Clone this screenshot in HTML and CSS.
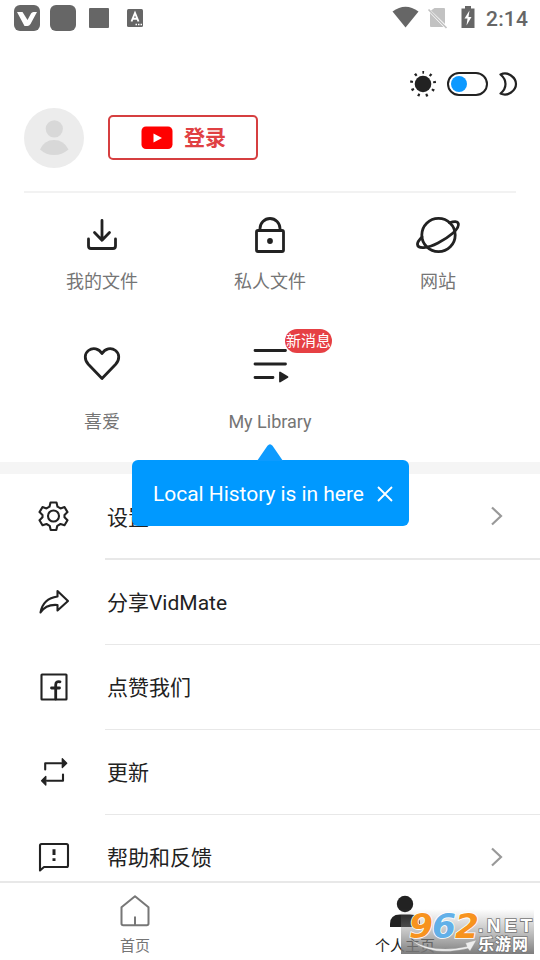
FILE: index.html
```html
<!DOCTYPE html>
<html lang="zh-CN">
<head>
<meta charset="utf-8">
<meta name="viewport" content="width=device-width, initial-scale=1">
<title>VidMate</title>
<link rel="stylesheet" href="styles.css">
</head>
<body>
<div class="app">
  <header class="status">
    <svg class="status-left" width="160" height="36" viewBox="0 0 160 36" fill="#666">
      <rect x="14" y="5" width="26" height="26" rx="6"/>
      <path d="M17 12h5.500l5 8 3.500-6.500q.8-1.500 2.500-1.500h3.500l-6.500 12q-1.200 2-3 2h-3z" fill="#fff"/>
      <rect x="50" y="5" width="26" height="26" rx="6"/>
      <rect x="89" y="8" width="20" height="20" rx="1"/>
      <rect x="127" y="9" width="16" height="18" rx="1.500"/>
      <path d="M131.500 21.500l3.500-8.500 3.500 8.500M132.700 18.800h4.600" fill="none" stroke="#fff" stroke-width="1.900"/>
      <path d="M135.500 24.500h1.500m1 0h1.500m1 0h1.500" stroke="#fff" stroke-width="1.300"/>
    </svg>
    <svg class="status-right" width="90" height="36" viewBox="390 0 90 36" fill="#666">
      <path d="M392.500 11.500Q405.500 2 418.500 11.500L405.500 27.500z"/>
      <path d="M434.500 8h9.500q1 0 1 1v15L431 10.500zM430 13L443.500 27h-12.500q-1 0-1-1z" fill="#c2c2c2"/>
      <path d="M428.500 9.500l18 18.500" stroke="#c2c2c2" stroke-width="1.700"/>
      <path d="M461.500 8.500h3.500v-2.500h6v2.500h3.500v19.500h-13z"/>
      <path d="M469.500 10.500l-5 8h3l-1 7 5-8.500h-3z" fill="#fff"/>
    </svg>
    <span class="clock">2:14</span>
  </header>

  <div class="theme">
    <svg width="28" height="28" viewBox="409 70 28 28">
      <circle cx="423" cy="84" r="8.300" fill="#222"/>
      <circle cx="423" cy="84" r="11.700" fill="none" stroke="#222" stroke-width="2.800" stroke-dasharray="2.200 5.968" stroke-dashoffset="1.100" transform="rotate(-90 423 84)"/>
    </svg>
    <span class="switch"><span class="knob"></span></span>
    <svg class="moon" width="22" height="26" viewBox="497 71 22 26" fill="none" stroke="#222" stroke-width="2.200" stroke-linejoin="round">
      <path d="M500.500 74.500Q506 72 511 75.500Q516 79 516 84T511 92.500Q506 96 500.500 93.500Q505.500 89.500 505.500 84T500.500 74.500z"/>
    </svg>
  </div>

  <section class="profile">
    <div class="avatar">
      <svg width="60" height="60" viewBox="0 0 60 60" fill="#d8d8d8"><circle cx="30.300" cy="20.800" r="8.600"/><path d="M16 41.500Q20 32 30 32T44.500 41.500Q38 47 30 47T16 41.500z"/></svg>
    </div>
    <button class="login">
      <svg width="32" height="24" viewBox="0 0 32 24"><rect x=".5" y=".5" width="31" height="22.500" rx="4.500" fill="#f00"/><path d="M12.500 7.500v9l8.500-4.500z" fill="#fff"/></svg>
      <span>登录</span>
    </button>
  </section>

  <section class="shortcuts">
    <a class="cell">
      <svg width="48" height="48" viewBox="78 211 48 48" class="ico"><path d="M102 220.500v19.500M94.500 232.500l7.500 7.800 7.500-7.800M88.500 239v7q0 2.500 2.500 2.500h22q2.500 0 2.500-2.500v-7"/></svg>
      <span>我的文件</span>
    </a>
    <a class="cell">
      <svg width="48" height="48" viewBox="246 211 48 48" class="ico"><rect x="256.500" y="230.500" width="27" height="21" rx="1.500"/><path d="M260 230v-1.500a10 10 0 0 1 20 0v1.500"/><circle cx="270" cy="241" r="2.900" fill="#222" stroke="none"/></svg>
      <span>私人文件</span>
    </a>
    <a class="cell">
      <svg width="48" height="48" viewBox="414 211 48 48" class="ico"><circle cx="438.500" cy="235" r="16.700"/><path d="M449.500 222.800Q457 220 458.300 223.500C460 229 448.500 237.500 438 243C427 248.700 418 249 417.500 244.500Q417.300 241.500 422 237"/></svg>
      <span>网站</span>
    </a>
    <a class="cell">
      <svg width="48" height="48" viewBox="78 339 48 48" class="ico"><path d="M102 378.500L88.300 364.300C84 359.500 84.500 353.500 88.500 350.500C93 347 99 348.500 102 353.500C105 348.500 111 347 115.500 350.500C119.500 353.500 120 359.500 115.700 364.300z"/></svg>
      <span>喜爱</span>
    </a>
    <a class="cell library">
      <svg width="48" height="48" viewBox="246 339 48 48" class="ico"><path d="M255 350.500h30.500M255 364h30.500M255 377.500h18"/><path d="M280 372.500v9l7.500-4.500z" fill="#222" stroke-width="1.800"/></svg>
      <span>My Library</span>
      <em class="badge">新消息</em>
      <div class="tooltip">
        <svg class="tip" width="28" height="17" viewBox="0 0 28 17"><path d="M1 17L11.500 1.800Q14-1.200 16.500 1.800L27 17z" fill="#0d9bff"/></svg>
        <b>Local History is in here</b>
        <svg class="close" width="18" height="18" viewBox="0 0 18 18"><path d="M2 2l14 14M16 2L2 16" stroke="#fff" stroke-width="1.800" fill="none"/></svg>
      </div>
    </a>
  </section>

  <main class="menu">
    <div class="row">
      <svg width="36" height="36" viewBox="36 498 36 36" class="ico thin"><path d="M50.500 502.500h6l1 4.200 3 1.700 4-1.300 3 5-3 2.900v2.200l3 3-3 5-4-1.200-3.200 1.800-1 4.200h-5.600l-1-4.200-3.200-1.800-4 1.200-3-5 3-3v-2.200l-3-2.900 3-5 4 1.300 3-1.700z"/><circle cx="53.500" cy="516" r="5.500"/></svg>
      <span>设置</span>
      <svg class="arrow" width="14" height="22" viewBox="0 0 14 22"><path d="M2 2.500l9 8.500-9 8.500"/></svg>
    </div>
    <div class="row">
      <svg width="36" height="36" viewBox="36 584 36 36" class="ico thin"><path d="M57.500 591l10.500 10-10.500 9.500v-5.500Q46 604 40.500 612.500Q43 598.500 57.500 596.500z"/></svg>
      <span>分享VidMate</span>
    </div>
    <div class="row">
      <svg width="36" height="36" viewBox="36 669 36 36" class="ico thin"><rect x="41.500" y="674.500" width="25" height="25" rx=".5"/><path d="M60 681.800Q55.700 681 55.700 685v14M51.500 688h8" stroke-width="2.800"/></svg>
      <span>点赞我们</span>
    </div>
    <div class="row">
      <svg width="36" height="36" viewBox="36 754 36 36" class="ico thin"><path d="M45.200 769.500v-6.300h16M63 774.500v6.300h-16"/><path d="M62.300 758.800v8.800l4.400-4.400zM45.800 776.500v8.600l-4.200-4.300z" fill="#222" stroke-width="1.300"/></svg>
      <span>更新</span>
    </div>
    <div class="row">
      <svg width="36" height="36" viewBox="36 839 36 36" class="ico thin"><path d="M40 870.500v-25q0-1.500 1.500-1.500h25q1.500 0 1.500 1.500v20q0 1.500-1.500 1.500h-22.500z"/><path d="M54 849.300v5.700M54 858.300v2.800" stroke-width="3" stroke-linecap="butt"/></svg>
      <span>帮助和反馈</span>
      <svg class="arrow" width="14" height="22" viewBox="0 0 14 22"><path d="M2 2.500l9 8.500-9 8.500"/></svg>
    </div>
  </main>

  <nav class="tabs">
    <a class="tab">
      <svg width="36" height="36" viewBox="117 892 36 36" fill="none" stroke="#777" stroke-width="2" stroke-linejoin="round"><path d="M121.500 907.200L135 896.200l13.500 11v16.300q0 1.700-1.700 1.700h-23.600q-1.700 0-1.700-1.700zM135 916.500v8.500"/></svg>
      <span>首页</span>
    </a>
    <a class="tab active">
      <svg width="36" height="36" viewBox="387 892 36 36" fill="#222"><circle cx="405" cy="904" r="8.200"/><path d="M390 927v-3q0-9.500 10-9.500h10q10 0 10 9.500v3z"/></svg>
      <span>个人主页</span>
    </a>
  </nav>

  <div class="watermark">
    <svg width="139" height="50" viewBox="401 908 139 50">
      <defs>
        <linearGradient id="shade" x1="0" y1="0" x2="0" y2="1"><stop offset="0" stop-color="#888" stop-opacity="0"/><stop offset=".45" stop-color="#888" stop-opacity=".45"/><stop offset="1" stop-color="#777" stop-opacity=".95"/></linearGradient>
      </defs>
      <rect x="401" y="909" width="133" height="45" fill="url(#shade)"/>
      <path d="M411 940Q434 954 467 946.500l-1.500-3.500 11-3-6.500 11-2-2.500Q430 957 411 940z" fill="#eee" stroke="#999" stroke-width=".4"/>
      <g class="num">
        <text x="409" y="937.500" textLength="24" lengthAdjust="spacingAndGlyphs" fill="#f7931e">9</text>
        <text x="432" y="937.500" textLength="24" lengthAdjust="spacingAndGlyphs" fill="#62b0e8">6</text>
        <text x="455" y="937.500" textLength="24" lengthAdjust="spacingAndGlyphs" fill="#f7931e">2</text>
      </g>
      <text class="net" x="478" y="932" textLength="54">.NET</text>
      <text class="cn" x="478" y="949.500" textLength="50">乐游网</text>
    </svg>
  </div>
</div>
</body>
</html>
```

FILE: styles.css
```css
* { box-sizing: border-box; }
body {
  margin: 0;
  background: #fff;
  color: #222;
  font-family: Roboto, "Noto Sans CJK SC", sans-serif;
}
svg { display: block; flex: none; }
.app {
  position: relative;
  width: 540px;
  height: 960px;
  overflow: hidden;
  display: flex;
  flex-direction: column;
}
.status { display: flex; height: 36px; flex: none; }
.status-right { margin-left: 230px; }
.clock {
  margin-left: 6px;
  font-size: 21px;
  font-weight: 500;
  line-height: 38px;
  letter-spacing: .2px;
  color: #666;
}
.theme {
  display: flex;
  align-items: center;
  height: 28px;
  margin: 34px 21px 0 409px;
  flex: none;
}
.switch {
  flex: none;
  width: 41px;
  height: 24px;
  margin-left: 10px;
  border: 2px solid #222;
  border-radius: 12px;
  padding: 2px;
}
.knob {
  display: block;
  width: 16px;
  height: 16px;
  border-radius: 50%;
  background: #0d99ff;
}
.moon { margin-left: 9px; }
.profile {
  display: flex;
  align-items: center;
  gap: 24px;
  height: 95px;
  margin: 0 24px;
  padding: 10px 0 23px;
  border-bottom: 2px solid #f2f2f2;
  flex: none;
}
.avatar { width: 60px; height: 60px; border-radius: 50%; background: #ececec; }
.login {
  display: flex;
  align-items: center;
  gap: 11px;
  width: 150px;
  height: 45px;
  margin-bottom: 1px;
  padding: 0 0 0 31px;
  border: 2px solid #d63f40;
  border-radius: 5px;
  background: #fff;
  color: #e04043;
  font: 700 21px/40px Roboto, "Noto Sans CJK SC", sans-serif;
}
.login span { padding-top: 1px; }
.shortcuts {
  display: grid;
  grid-template-columns: repeat(3, 168px);
  grid-template-rows: 128px 141px;
  padding: 0 18px;
  height: 269px;
  flex: none;
}
.cell {
  position: relative;
  display: flex;
  flex-direction: column;
  align-items: center;
  padding-top: 18px;
  gap: 11px;
  font-size: 18px;
  line-height: 24px;
  color: #757575;
}
.cell:nth-child(n+4) { gap: 23px; }
.ico {
  fill: none;
  stroke: #222;
  stroke-width: 2.8;
  stroke-linecap: round;
  stroke-linejoin: round;
}
.thin { stroke-width: 2.1; }
.badge {
  position: absolute;
  top: 8px;
  left: 99px;
  width: 47px;
  height: 24px;
  border-radius: 12px;
  background: #e64044;
  color: #fff;
  font-size: 15px;
  font-style: normal;
  line-height: 24px;
  text-align: center;
}
.tooltip {
  position: absolute;
  z-index: 2;
  top: 139px;
  left: -54px;
  width: 277px;
  height: 66px;
  display: flex;
  align-items: center;
  gap: 12px;
  padding: 2px 0 0 21px;
  border-radius: 6px;
  background: #0099ff;
  color: #fff;
  font-size: 21px;
  white-space: nowrap;
}
.tooltip b { width: 211px; font-weight: 400; letter-spacing: -.04px; }
.tip { position: absolute; top: -16px; left: 124px; }
.menu {
  flex: 1;
  min-height: 0;
  overflow: hidden;
  border-top: 12px solid #f5f5f5;
}
.row {
  display: flex;
  align-items: center;
  height: 85px;
  padding: 0 0 2px 36px;
  font-size: 21px;
  line-height: 30px;
  background: linear-gradient(#e8e8e8, #e8e8e8) 105px 100% / 435px 1px no-repeat;
}
.row:first-child { height: 86px; background-size: 435px 2px; }
.row span { margin-left: 35px; padding-top: 3px; }
.arrow { margin: 0 36px 0 auto; fill: none; stroke: #999; stroke-width: 2.2; }
.tabs {
  display: flex;
  height: 79px;
  flex: none;
  border-top: 2px solid #e8e8e8;
  background: #fff;
}
.tab {
  flex: 1;
  display: flex;
  flex-direction: column;
  align-items: center;
  padding-top: 9px;
  gap: 8px;
  font-size: 15px;
  line-height: 20px;
  color: #757575;
}
.active { color: #222; }
.watermark { position: absolute; top: 908px; left: 401px; z-index: 3; }
.num text {
  font: italic 700 33px "DejaVu Sans", sans-serif;
  stroke: #fff;
  stroke-width: 1.6px;
  paint-order: stroke;
}
.net, .cn {
  fill: #fff;
  stroke: #777;
  stroke-width: 1.6px;
  paint-order: stroke;
}
.net { font: 700 19px "Liberation Sans", sans-serif; }
.cn { font: 700 16px "Noto Sans CJK SC", sans-serif; }
```
